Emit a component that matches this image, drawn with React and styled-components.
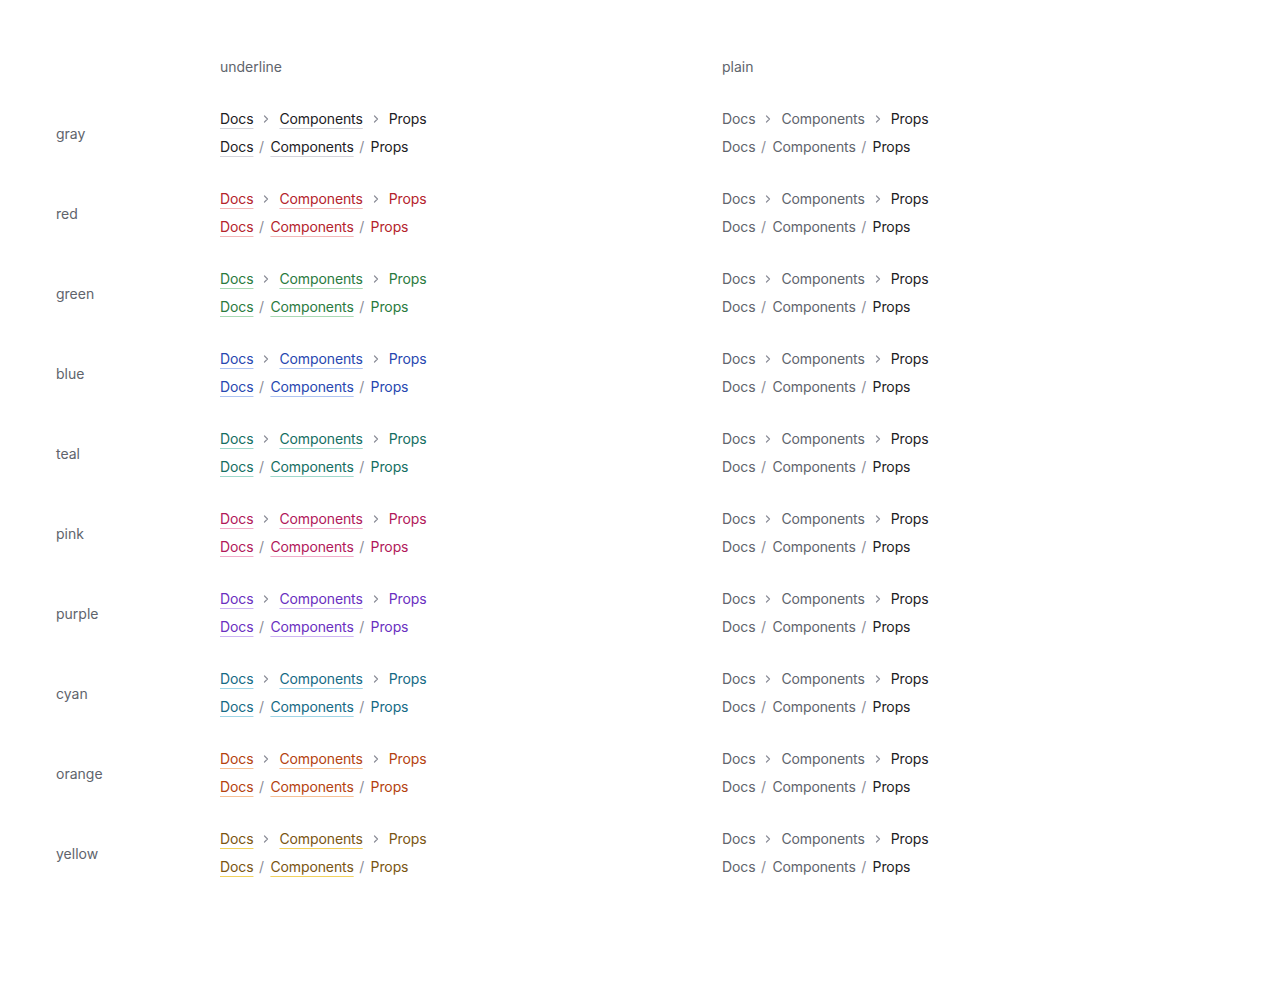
import React from "react";
import styled, { createGlobalStyle } from "styled-components";

const Global = createGlobalStyle`
  html, body { margin: 0; padding: 0; background: #fff; }
  body { font-family: Inter, "Noto Sans", sans-serif; -webkit-font-smoothing: antialiased; }
`;

const palette = {
  gray: { text: "#1c2024", line: "#d3d4db" },
  red: { text: "#b4232c", line: "#f2b8b8" },
  green: { text: "#2a7a3e", line: "#a9d9b4" },
  blue: { text: "#2747b0", line: "#aec4f2" },
  teal: { text: "#146e62", line: "#9fd8cb" },
  pink: { text: "#b1185a", line: "#f1adc9" },
  purple: { text: "#6a2fbf", line: "#cdb6f2" },
  cyan: { text: "#156a85", line: "#9fd5e6" },
  orange: { text: "#b4420f", line: "#f6c196" },
  yellow: { text: "#7a5512", line: "#f1d25c" },
};

const Page = styled.div`
  display: grid;
  grid-template-columns: 164px 502px 1fr;
  row-gap: 32px;
  padding: 57px 0 0 56px;
  font-size: 14px;
  line-height: 20px;
  color: #60646c;
`;

const Header = styled.div`
  color: #60646c;
`;

const Label = styled.div`
  display: flex;
  align-items: center;
  padding-top: 1px;
  color: #60646c;
`;

const Cell = styled.div`
  display: flex;
  flex-direction: column;
  gap: 8px;
`;

const Trail = styled.nav`
  display: flex;
  align-items: center;
  white-space: nowrap;
  letter-spacing: -0.008em;
`;

const Crumb = styled.a`
  color: ${(p) => (p.$variant === "underline" ? palette[p.$color].text : "#60646c")};
  text-decoration: ${(p) => (p.$variant === "underline" ? "underline" : "none")};
  text-decoration-color: ${(p) => palette[p.$color].line};
  text-decoration-thickness: 1px;
  text-underline-offset: 4px;
  cursor: pointer;
`;

const Current = styled.span`
  color: ${(p) => (p.$variant === "underline" ? palette[p.$color].text : "#1c2024")};
`;

const Sep = styled.span`
  display: inline-flex;
  align-items: center;
  justify-content: center;
  color: #8b8d98;
  margin: ${(p) => (p.$kind === "chevron" ? "0 8px" : "0 6.5px 0 5.5px")};
  width: ${(p) => (p.$kind === "chevron" ? "10px" : "auto")};
`;

function Separator({ kind }) {
  if (kind === "chevron") {
    return (
      <Sep $kind="chevron">
        <svg width="10" height="10" viewBox="0 0 10 10" fill="none">
          <path d="M3.5 2 L6.5 5 L3.5 8" stroke="currentColor" strokeWidth="1.2" strokeLinecap="round" strokeLinejoin="round" />
        </svg>
      </Sep>
    );
  }
  return <Sep $kind="slash">/</Sep>;
}

function Breadcrumb({ color, variant, kind }) {
  return (
    <Trail>
      <Crumb $color={color} $variant={variant}>Docs</Crumb>
      <Separator kind={kind} />
      <Crumb $color={color} $variant={variant}>Components</Crumb>
      <Separator kind={kind} />
      <Current $color={color} $variant={variant}>Props</Current>
    </Trail>
  );
}

const colors = ["gray", "red", "green", "blue", "teal", "pink", "purple", "cyan", "orange", "yellow"];

export default function App() {
  return (
    <>
      <Global />
      <Page>
        <div />
        <Header>underline</Header>
        <Header>plain</Header>
        {colors.map((c) => (
          <React.Fragment key={c}>
            <Label>{c}</Label>
            <Cell>
              <Breadcrumb color={c} variant="underline" kind="chevron" />
              <Breadcrumb color={c} variant="underline" kind="slash" />
            </Cell>
            <Cell>
              <Breadcrumb color={c} variant="plain" kind="chevron" />
              <Breadcrumb color={c} variant="plain" kind="slash" />
            </Cell>
          </React.Fragment>
        ))}
      </Page>
    </>
  );
}
